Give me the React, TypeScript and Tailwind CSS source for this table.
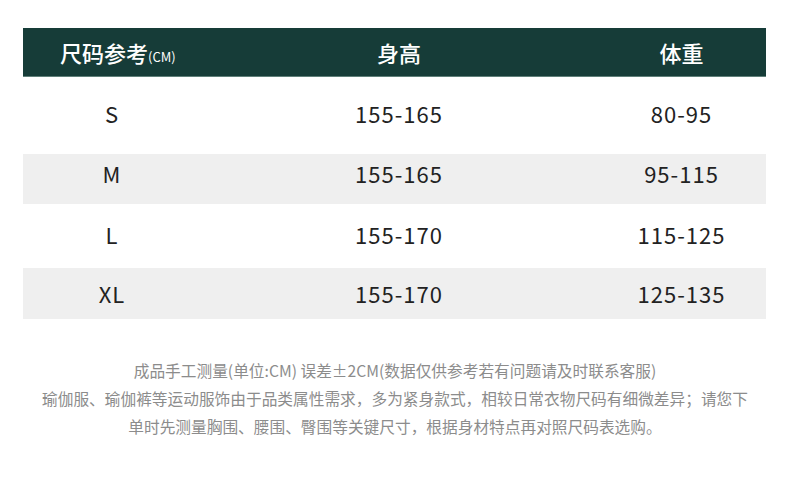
const rows = [
  { size: 'S', height: '155-165', weight: '80-95', band: false, cls: 'h-[77px] pb-1' },
  { size: 'M', height: '155-165', weight: '95-115', band: true, cls: 'h-[50px] pb-3' },
  { size: 'L', height: '155-170', weight: '115-125', band: false, cls: 'h-[64px] pb-1' },
  { size: 'XL', height: '155-170', weight: '125-135', band: true, cls: 'h-[51px]' },
];

export default function App() {
  return (
    <div
      className="w-[790px] h-[477px] bg-white pt-[28px] pl-[23px] pr-[24px]"
      style={{ fontFamily: '"Noto Sans CJK SC", "Noto Sans", sans-serif' }}
    >
      {/* table */}
      <div className="grid grid-cols-[178px_396px_169px] h-[49px] bg-[#163c38] border-b border-[#5f7f79] text-white text-[22px] font-medium items-center">
        <div className="pl-[37px] flex items-baseline">
          尺码参考<span className="text-[13px] font-normal">(CM)</span>
        </div>
        <div className="text-center">身高</div>
        <div className="text-center">体重</div>
      </div>

      {rows.map((r) => (
        <div
          key={r.size}
          className={`grid grid-cols-[178px_396px_169px] items-center text-[22px] tracking-[1px] text-[#222] ${r.cls} ${r.band ? 'bg-[#efefef]' : 'bg-white'}`}
        >
          <div className="text-center">{r.size}</div>
          <div className="text-center">{r.height}</div>
          <div className="text-center">{r.weight}</div>
        </div>
      ))}

      {/* note */}
      <div className="mt-[38px] text-[15.7px] leading-[28px] text-[#8c8c8c] text-center -ml-[23px] -mr-[24px]">
        <p>成品手工测量(单位:CM) 误差±2CM(数据仅供参考若有问题请及时联系客服)</p>
        <p>瑜伽服、瑜伽裤等运动服饰由于品类属性需求，多为紧身款式，相较日常衣物尺码有细微差异；请您下</p>
        <p>单时先测量胸围、腰围、臀围等关键尺寸，根据身材特点再对照尺码表选购。</p>
      </div>
    </div>
  );
}
